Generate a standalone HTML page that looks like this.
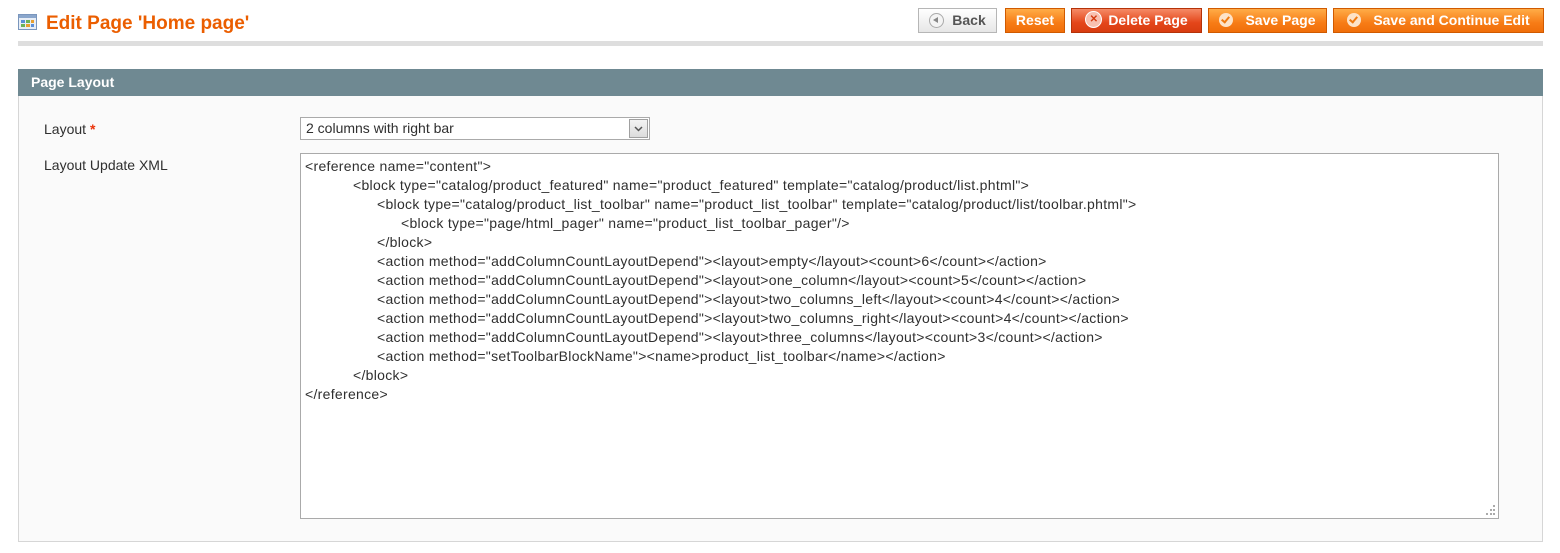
<!DOCTYPE html>
<html><head><meta charset="utf-8"><style>
body{margin:0;width:1560px;height:553px;background:#fff;font-family:"Liberation Sans",Arial,sans-serif;font-size:13px;color:#2f2f2f;position:relative;overflow:hidden}
.abs{position:absolute}
h3{position:absolute;left:46px;top:13px;margin:0;font-size:19px;color:#eb5e00;font-weight:bold}
.btn{position:absolute;top:8px;height:23px;border:1px solid #d05a00;background:linear-gradient(#ffac47,#f77c16 60%,#f06e0a);color:#fff;font-weight:bold;font-size:14px;line-height:23px;box-sizing:content-box;text-align:center}
.btn .ic{display:inline-block;width:14px;height:14px;border-radius:50%;background:#fde3c8;vertical-align:-2px;margin-right:12px;position:relative}
.btn .ic:after{content:"";position:absolute;left:4px;top:2px;width:3px;height:6px;border:solid #f07a10;border-width:0 2px 2px 0;transform:rotate(40deg)}
.del{background:linear-gradient(#f58a66,#e4461a 60%,#d83c10);border-color:#b53208}
.back{background:linear-gradient(#fff,#e6e6e6);border-color:#b6b6b6;color:#555}
.xml{position:absolute;left:300px;top:153px;width:1199px;height:366px;border:1px solid #aaa;box-sizing:border-box;background:#fff;padding:3px 4px;line-height:19px;white-space:pre;font-size:14px;letter-spacing:0.3px;color:#2f2f2f}
.i1{padding-left:48px}.i2{padding-left:72px}.i3{padding-left:96px}
</style></head><body>
<svg class="abs" style="left:18px;top:14px" width="19" height="16" viewBox="0 0 19 16"><rect x="0.5" y="0.5" width="18" height="15" fill="#e8eef6" stroke="#7a96bd"/><rect x="1" y="1" width="17" height="3" fill="#8aa6cc"/><rect x="3" y="6" width="4" height="3" fill="#5a8fd8"/><rect x="8" y="6" width="4" height="3" fill="#6bb25a"/><rect x="13" y="6" width="3" height="3" fill="#e8a030"/><rect x="3" y="10" width="4" height="3" fill="#6bb25a"/><rect x="8" y="10" width="4" height="3" fill="#e8a030"/><rect x="13" y="10" width="3" height="3" fill="#5a8fd8"/></svg>
<h3>Edit Page 'Home page'</h3>
<div class="btn back" style="left:918px;width:77px"><span style="display:inline-block;width:13px;height:13px;border-radius:50%;border:1px solid #aaa;background:#f4f4f4;vertical-align:-3px;margin-right:8px;position:relative"><span style="position:absolute;left:3px;top:3px;border-right:5px solid #888;border-top:3.5px solid transparent;border-bottom:3.5px solid transparent"></span></span>Back</div>
<div class="btn" style="left:1005px;width:58px">Reset</div>
<div class="btn del" style="left:1071px;width:129px"><span style="display:inline-block;width:15px;height:15px;border-radius:50%;background:#f8c0b0;border:1px solid #fff;color:#d43a10;font-size:10px;line-height:15px;vertical-align:middle;margin-top:-3px;margin-right:6px">✕</span>Delete Page</div>
<div class="btn" style="left:1208px;width:117px"><span class="ic"></span>Save Page</div>
<div class="btn" style="left:1333px;width:209px"><span class="ic"></span>Save and Continue Edit</div>
<div class="abs" style="left:18px;top:41px;width:1525px;height:5px;background:#dedede"></div>
<div class="abs" style="left:18px;top:69px;width:1525px;height:27px;background:#6f8992;color:#fff;font-weight:bold;font-size:14px;line-height:27px;padding-left:13px;box-sizing:border-box">Page Layout</div>
<div class="abs" style="left:18px;top:96px;width:1525px;height:446px;background:#fafafa;border:1px solid #d6d6d6;border-top:0;box-sizing:border-box"></div>
<div class="abs" style="left:44px;top:121px;font-size:14px">Layout <span style="color:#eb340a;font-weight:bold">*</span></div>
<div class="abs" style="left:44px;top:157px;font-size:14px">Layout Update XML</div>
<div class="abs" style="left:300px;top:117px;width:350px;height:23px;border:1px solid #aaa;box-sizing:border-box;background:#fff;font-size:14px;line-height:21px;padding-left:5px">2 columns with right bar
<div class="abs" style="right:1px;top:1px;width:19px;height:19px;border:1px solid #a0a0a0;box-sizing:border-box;background:linear-gradient(#f4f4f4,#dcdcdc)"><svg width="17" height="17" viewBox="0 0 17 17" style="position:absolute;left:0;top:0"><path d="M5 7l3.5 3.5L12 7" fill="none" stroke="#555" stroke-width="1.5"/></svg></div></div>
<div class="xml">&lt;reference name="content"&gt;
<span class="i1"></span>&lt;block type="catalog/product_featured" name="product_featured" template="catalog/product/list.phtml"&gt;
<span class="i2"></span>&lt;block type="catalog/product_list_toolbar" name="product_list_toolbar" template="catalog/product/list/toolbar.phtml"&gt;
<span class="i3"></span>&lt;block type="page/html_pager" name="product_list_toolbar_pager"/&gt;
<span class="i2"></span>&lt;/block&gt;
<span class="i2"></span>&lt;action method="addColumnCountLayoutDepend"&gt;&lt;layout&gt;empty&lt;/layout&gt;&lt;count&gt;6&lt;/count&gt;&lt;/action&gt;
<span class="i2"></span>&lt;action method="addColumnCountLayoutDepend"&gt;&lt;layout&gt;one_column&lt;/layout&gt;&lt;count&gt;5&lt;/count&gt;&lt;/action&gt;
<span class="i2"></span>&lt;action method="addColumnCountLayoutDepend"&gt;&lt;layout&gt;two_columns_left&lt;/layout&gt;&lt;count&gt;4&lt;/count&gt;&lt;/action&gt;
<span class="i2"></span>&lt;action method="addColumnCountLayoutDepend"&gt;&lt;layout&gt;two_columns_right&lt;/layout&gt;&lt;count&gt;4&lt;/count&gt;&lt;/action&gt;
<span class="i2"></span>&lt;action method="addColumnCountLayoutDepend"&gt;&lt;layout&gt;three_columns&lt;/layout&gt;&lt;count&gt;3&lt;/count&gt;&lt;/action&gt;
<span class="i2"></span>&lt;action method="setToolbarBlockName"&gt;&lt;name&gt;product_list_toolbar&lt;/name&gt;&lt;/action&gt;
<span class="i1"></span>&lt;/block&gt;
&lt;/reference&gt;</div>
<svg class="abs" style="left:1483px;top:503px" width="14" height="14"><g fill="#aaa"><rect x="10" y="2" width="2" height="2"/><rect x="7" y="6" width="2" height="2"/><rect x="10" y="6" width="2" height="2"/><rect x="3" y="10" width="2" height="2"/><rect x="7" y="10" width="2" height="2"/><rect x="10" y="10" width="2" height="2"/></g></svg>
</body></html>
